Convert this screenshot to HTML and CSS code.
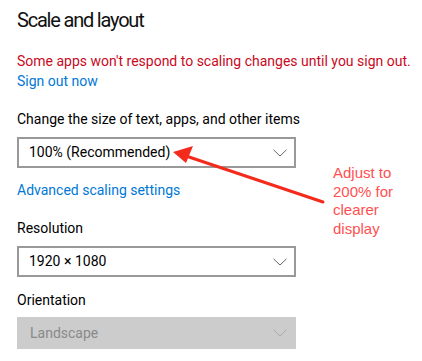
FILE: index.html
```html
<!DOCTYPE html>
<html>
<head>
<meta charset="utf-8">
<link rel="stylesheet" href="styles.css">
</head>
<body>
<div class="page">
  <h1 class="title">Scale and layout</h1>
  <p class="warning">Some apps won't respond to scaling changes until you sign out.</p>
  <a class="link signout" href="#">Sign out now</a>
  <div class="label first-label">Change the size of text, apps, and other items</div>
  <div class="select">
    <span>100% (Recommended)</span>
    <svg class="chev" width="14" height="8" viewBox="0 0 14 8"><path d="M0.5 0.8 L7 7 L13.5 0.8" fill="none" stroke="#666" stroke-width="1"/></svg>
  </div>
  <a class="link advanced" href="#">Advanced scaling settings</a>
  <div class="label">Resolution</div>
  <div class="select">
    <span>1920 × 1080</span>
    <svg class="chev" width="14" height="8" viewBox="0 0 14 8"><path d="M0.5 0.8 L7 7 L13.5 0.8" fill="none" stroke="#666" stroke-width="1"/></svg>
  </div>
  <div class="label orient">Orientation</div>
  <div class="select disabled">
    <span>Landscape</span>
    <svg class="chev" width="14" height="8" viewBox="0 0 14 8"><path d="M0.5 0.8 L7 7 L13.5 0.8" fill="none" stroke="#aaa" stroke-width="1"/></svg>
  </div>

  <svg class="arrow" width="422" height="361" viewBox="0 0 422 361">
    <line x1="323" y1="202" x2="186" y2="156" stroke="#f42b1c" stroke-width="3" stroke-linecap="round"/>
    <polygon points="173,152 193,146 186,163" fill="#f42b1c"/>
  </svg>
  <div class="note">Adjust to<br>200% for<br>clearer<br>display</div>
</div>
</body>
</html>
```

FILE: styles.css
```css
html, body {
  margin: 0;
  padding: 0;
  background: #fff;
}
.page {
  position: relative;
  width: 422px;
  height: 361px;
  box-sizing: border-box;
  padding: 6px 0 0 17px;
  font-family: Roboto, "Noto Sans", sans-serif;
  font-size: 14px;
  line-height: 20px;
  color: #000;
  overflow: hidden;
}
.title {
  margin: 0;
  font-size: 20px;
  letter-spacing: -1.2px;
  font-weight: 400;
  line-height: 28px;
  color: #111;
}
.warning {
  margin: 17px 0 0 0;
  color: #c80a1e;
  white-space: nowrap;
}
.link {
  display: block;
  color: #0078d7;
  text-decoration: none;
}
.label {
  margin-top: 18px;
}
.select {
  margin-top: 8px;
  width: 279px;
  border: 2px solid #999;
  display: flex;
  align-items: center;
  justify-content: space-between;
  padding: 0 7px 0 10px;
  box-sizing: border-box;
  height: 31px;
  line-height: 27px;
}
.chev {
  display: block;
}
.advanced {
  margin-top: 12px;
}
.orient {
  margin-top: 13px;
}
.select.disabled {
  border: none;
  background: #ccc;
  color: #8a8a8a;
  height: 32px;
  padding: 0 9px 0 13px;
  margin-top: 7px;
}
.arrow {
  position: absolute;
  left: 0;
  top: 0;
  pointer-events: none;
}
.note {
  position: absolute;
  left: 333px;
  top: 164px;
  font-family: "Liberation Sans", Arial, sans-serif;
  font-size: 15px;
  line-height: 18.5px;
  color: #ff5050;
}
```
